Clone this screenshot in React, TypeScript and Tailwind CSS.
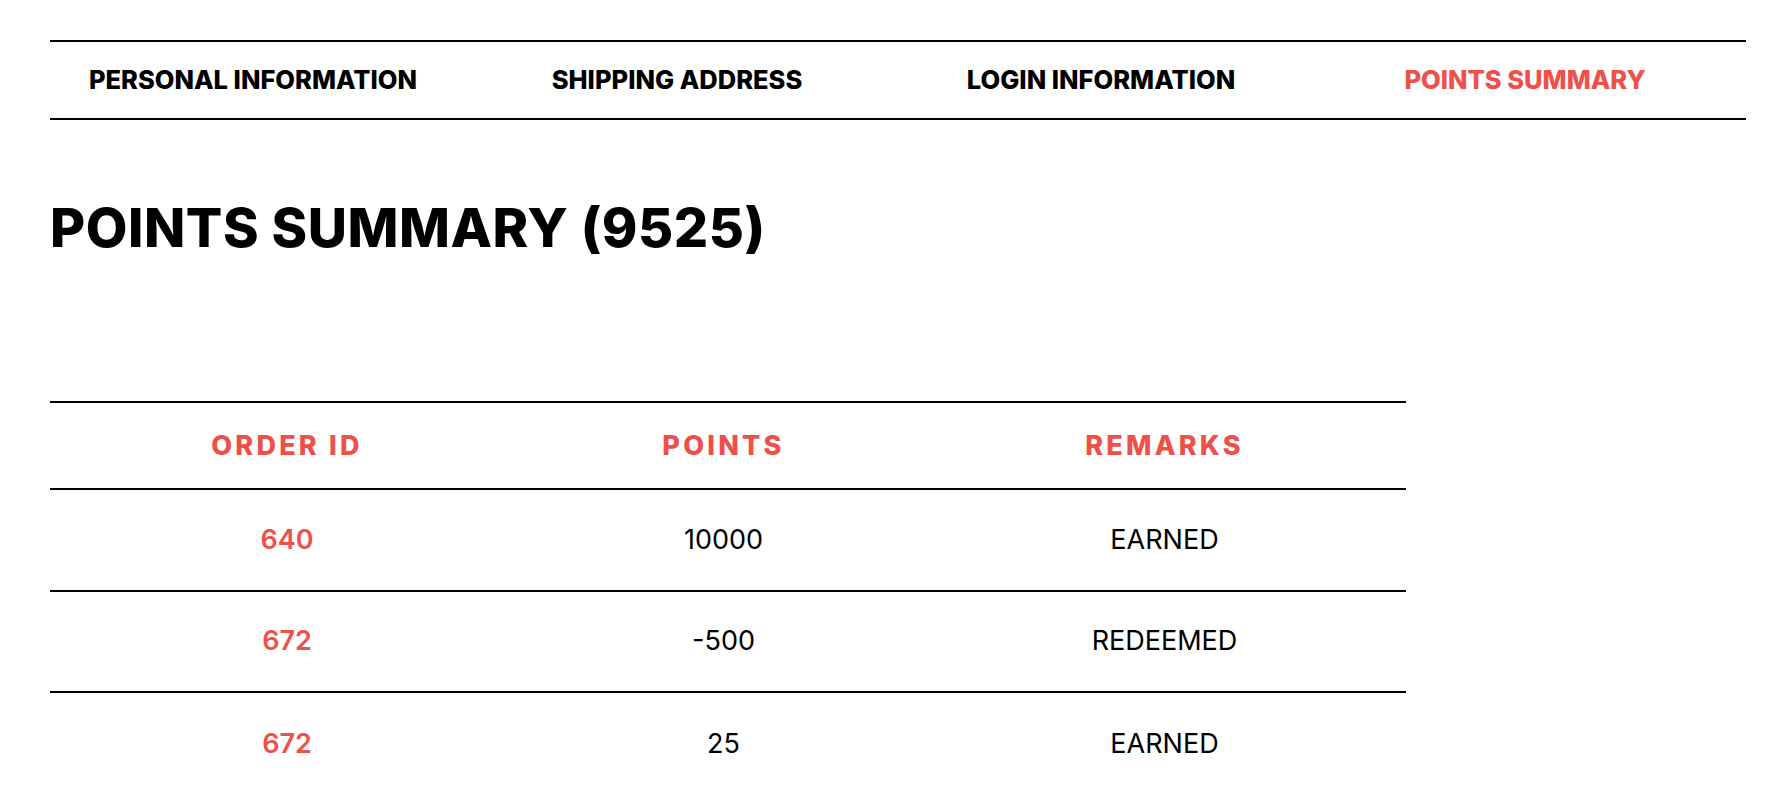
import React from 'react';

const tabs = [
  { label: 'PERSONAL INFORMATION', active: false },
  { label: 'SHIPPING ADDRESS', active: false },
  { label: 'LOGIN INFORMATION', active: false },
  { label: 'POINTS SUMMARY', active: true },
];

const rows = [
  { id: '640', points: '10000', remark: 'EARNED' },
  { id: '672', points: '-500', remark: 'REDEEMED' },
  { id: '672', points: '25', remark: 'EARNED' },
];

const cols = 'grid grid-cols-[474px_399px_483px]';

export default function App() {
  return (
    <div className="min-h-screen bg-white px-[50px] pt-[40px] font-['Inter',sans-serif] text-black">
      <nav className="grid h-[80px] w-[1696px] grid-cols-4 border-y-2 border-black">
        {tabs.map((tab) => (
          <div key={tab.label} className="flex items-center justify-center pr-[18px]">
            <span
              className={`text-[25.5px] font-extrabold leading-none ${tab.active ? 'text-[#f0504a]' : 'text-black'}`}
            >
              {tab.label}
            </span>
          </div>
        ))}
      </nav>

      <h1 className="mt-[81px] text-[54px] font-extrabold leading-none tracking-[0.01em]">POINTS SUMMARY (9525)</h1>

      <div className="mt-[146px] w-[1356px]">
        <div className={`${cols} h-[89px] border-y-2 border-black`}>
          {['ORDER ID', 'POINTS', 'REMARKS'].map((h) => (
            <div key={h} className="flex items-center justify-center">
              <span className="text-[27px] font-extrabold uppercase leading-none tracking-[0.12em] text-[#f0504a]">{h}</span>
            </div>
          ))}
        </div>
        {rows.map((row, i) => (
          <div
            key={i}
            className={`${cols} h-[101.5px] ${i < rows.length - 1 ? 'border-b-2 border-black' : ''}`}
          >
            <div className="flex items-center justify-center text-[27px] font-semibold text-[#f0504a]">{row.id}</div>
            <div className="flex items-center justify-center text-[27px]">{row.points}</div>
            <div className="flex items-center justify-center text-[27px]">{row.remark}</div>
          </div>
        ))}
      </div>
    </div>
  );
}
